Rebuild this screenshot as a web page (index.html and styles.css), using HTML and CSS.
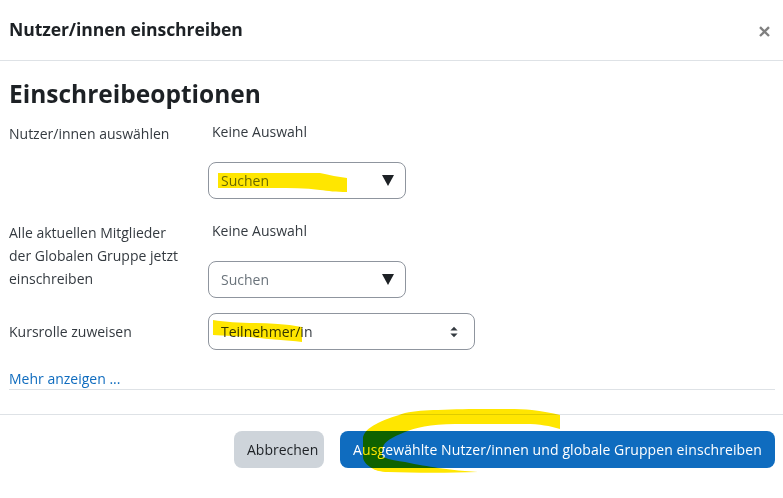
FILE: index.html
```html
<!DOCTYPE html>
<html lang="de">
<head>
<meta charset="utf-8">
<title>Nutzer/innen einschreiben</title>
<link rel="stylesheet" href="styles.css">
</head>
<body>
<div class="dialog">
  <header class="head">
    <h5 class="title">Nutzer/innen einschreiben</h5>
    <svg class="close" width="11" height="11" viewBox="0 0 11 11"><path d="M1 1.2 10 10M10 1.2 1 10" stroke="#808080" stroke-width="2.4" fill="none"/></svg>
  </header>
  <main class="body">
    <h3 class="section">Einschreibeoptionen</h3>
    <div class="row row-users">
      <label class="label">Nutzer/innen auswählen</label>
      <div class="field">
        <div class="none">Keine Auswahl</div>
        <div class="search"><span>Suchen</span><i class="down"></i></div>
      </div>
    </div>
    <div class="row row-groups">
      <label class="label">Alle aktuellen Mitglieder der Globalen Gruppe jetzt einschreiben</label>
      <div class="field">
        <div class="none">Keine Auswahl</div>
        <div class="search"><span>Suchen</span><i class="down"></i></div>
      </div>
    </div>
    <div class="row row-role">
      <label class="label">Kursrolle zuweisen</label>
      <div class="field">
        <div class="select"><span>Teilnehmer/in</span>
          <svg width="10" height="14" viewBox="0 0 10 14"><path d="M5 1.8 8.6 5.6H1.4ZM5 12.2 1.4 8.4H8.6Z" fill="#343a40"/></svg>
        </div>
      </div>
    </div>
    <a class="more" href="#">Mehr anzeigen ...</a>
    <hr class="rule">
  </main>
  <footer class="foot">
    <button class="btn cancel">Abbrechen</button>
    <button class="btn primary">Ausgewählte Nutzer/innen und globale Gruppen einschreiben</button>
  </footer>
</div>
<svg class="marks" width="783" height="498" viewBox="0 0 783 498">
  <path d="M218 173H320C330 175 338 177 347 178V192C336 192 328 191 320 190C305 188 290 188 275 188H218Z" fill="#ffe600"/>
  <path d="M213 320C225 322 240 323 255 323C270 323 285 324 302 327V342C285 340 265 339 250 337C238 336 225 336 213 335Z" fill="#ffe600"/>
  <path d="M560 415V429C550 426 540 424 525 424H455C430 424 415 428 405 432C392 437 384 442 383 447C382 452 381 455 383 457C390 460 398 461 405 462C418 465 428 466 438 468C452 470 465 471 478 472C450 473 415 473 388 472C380 472 376 470 375 470C368 466 363 462 363 457V437C365 430 372 426 378 423C388 418 396 416 405 413C415 411 425 410 438 410C455 409 470 409 488 409C505 409 520 409 532 410C542 411 552 413 560 415Z" fill="#ffe600"/>
</svg>
</body>
</html>
```
FILE: styles.css
```css
* { box-sizing: border-box; }
html, body { margin: 0; padding: 0; background: #fff; }
body {
  width: 783px;
  height: 498px;
  overflow: hidden;
  position: relative;
  font-family: "Open Sans", "Noto Sans", sans-serif;
  font-size: 14px;
  letter-spacing: 0;
  color: #343a40;
}
.dialog { display: flex; flex-direction: column; }
.head {
  height: 61px;
  border-bottom: 1px solid #dee2e6;
  display: flex;
  align-items: center;
  justify-content: space-between;
  padding: 0 13px 0 9px;
}
.title { margin: 0 0 3px; font-size: 17.6px; font-weight: 700; color: #1d2125; letter-spacing: -0.1px; }
.close { margin-top: 2px; }
.body { padding: 0 8px 0 9px; height: 354px; border-bottom: 1px solid #dee2e6; }
.section { margin: 17px 0 0; font-size: 24.5px; line-height: 32px; font-weight: 700; color: #1d2125; letter-spacing: 0; }
.row { display: grid; grid-template-columns: 199px 1fr; }
.label { width: 176px; line-height: 23px; color: #343a40; }
.row-users { margin-top: 9px; }
.row-users .label { padding-top: 3px; }
.row-groups { margin-top: 19px; }
.row-groups .label { padding-top: 3px; }
.row-role { margin-top: 15px; }
.row-role .label { padding-top: 7px; }
.none { height: 24px; padding: 1px 0 0 4px; line-height: 23px; }
.search {
  margin-top: 19px;
  width: 198px;
  height: 37px;
  border: 1px solid #8f959e;
  border-radius: 8px;
  display: flex;
  align-items: center;
  justify-content: space-between;
  padding: 0 11px 0 12px;
  color: #6a737b;
}
.down { width: 0; height: 0; border-left: 6px solid transparent; border-right: 6px solid transparent; border-top: 11px solid #1d2125; }
.select {
  width: 267px;
  height: 37px;
  border: 1px solid #8f959e;
  border-radius: 8px;
  display: flex;
  align-items: center;
  justify-content: space-between;
  padding: 0 15px 0 12px;
}
.more { display: block; margin-top: 17px; line-height: 23px; color: #0f6cbf; text-decoration: none; }
.rule { margin: -1px 0 0; border: 0; border-top: 1px solid #dee2e6; }
.foot { display: flex; justify-content: flex-end; gap: 16px; padding: 16px 8px 0 0; }
.btn {
  height: 37px;
  border: 0;
  border-radius: 8px;
  font: inherit;
  letter-spacing: inherit;
  padding: 0 10px;
}
.cancel { width: 90px; padding: 0 0 0 13px; text-align: left; background: #ced4da; color: #1d2125; }
.primary { width: 435px; background: #0f6cbf; color: #fff; letter-spacing: 0.1px; }
.marks { position: absolute; left: 0; top: 0; mix-blend-mode: multiply; pointer-events: none; }
```
